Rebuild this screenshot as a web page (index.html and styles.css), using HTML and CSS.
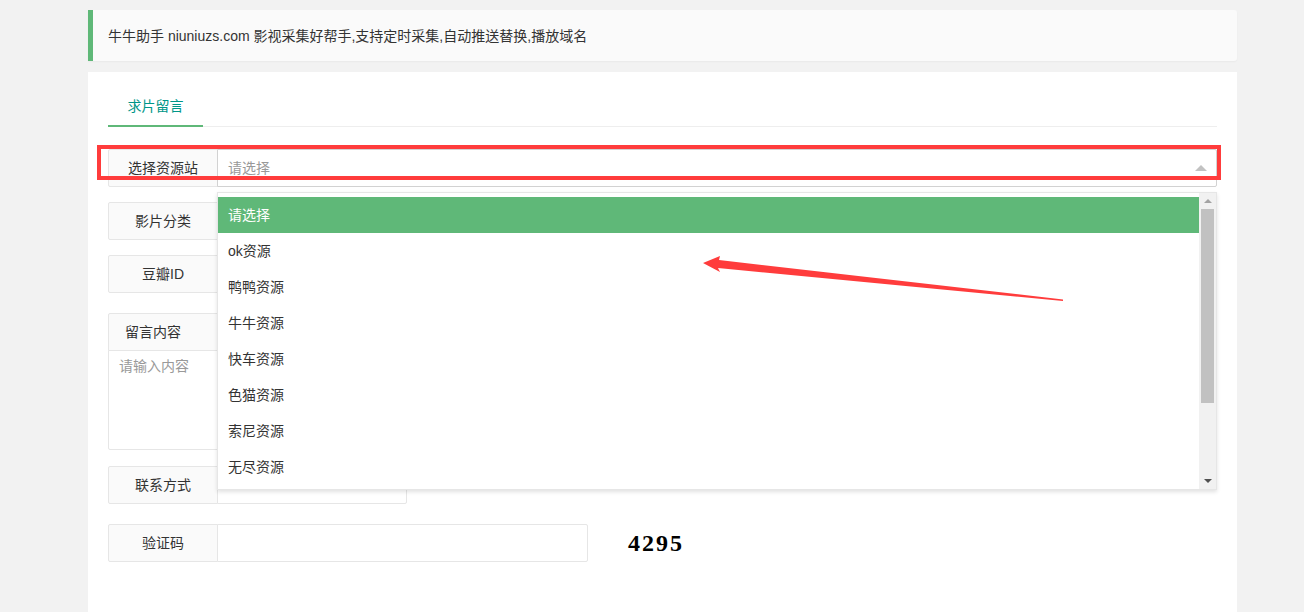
FILE: index.html
```html
<!DOCTYPE html>
<html lang="zh-CN">
<head>
  <meta charset="UTF-8" />
  <title>求片留言</title>
  <link rel="stylesheet" href="styles.css">
</head>
<body>

  <div class="page">
    <blockquote class="quote">牛牛助手 niuniuzs.com 影视采集好帮手,支持定时采集,自动推送替换,播放域名</blockquote>

    <div class="card">
      <ul class="tab-title">
        <li class="tab-this">求片留言</li>
      </ul>

      <form class="form">
        <div class="item">
          <label class="label">选择资源站</label>
          <div class="field">
            <div class="select-box">
              <span class="placeholder">请选择</span>
              <i class="edge"></i>
            </div>
            <div class="dropdown">
              <dl class="options">
                <dd class="option option-this">请选择</dd>
                <dd class="option">ok资源</dd>
                <dd class="option">鸭鸭资源</dd>
                <dd class="option">牛牛资源</dd>
                <dd class="option">快车资源</dd>
                <dd class="option">色猫资源</dd>
                <dd class="option">索尼资源</dd>
                <dd class="option">无尽资源</dd>
              </dl>
              <div class="scrollbar">
                <span class="sb-btn"><i class="sb-up"></i></span>
                <span class="sb-thumb"></span>
                <span class="sb-track"></span>
                <span class="sb-btn"><i class="sb-down"></i></span>
              </div>
            </div>
          </div>
        </div>

        <div class="item">
          <label class="label">影片分类</label>
          <div class="field"><input class="input" type="text"></div>
        </div>

        <div class="item item-wide">
          <label class="label">豆瓣ID</label>
          <div class="field"><input class="input" type="text"></div>
        </div>

        <div class="item-text">
          <label class="label label-block">留言内容</label>
          <textarea class="textarea" placeholder="请输入内容"></textarea>
        </div>

        <div class="item item-wide">
          <label class="label">联系方式</label>
          <div class="field field-short"><input class="input" type="text"></div>
        </div>

        <div class="item">
          <label class="label">验证码</label>
          <div class="field field-mid"><input class="input" type="text"></div>
          <span class="captcha">4295</span>
        </div>
      </form>
    </div>
  </div>

  <svg class="marks" width="1304" height="612" viewBox="0 0 1304 612">
    <rect x="99" y="147" width="1120" height="31" fill="none" stroke="#ff3c3c" stroke-width="4"/>
    <polygon fill="#ff3c3c" points="703,263 720,256 719,260 1063,299.5 1063,301 718,268 720,272"/>
  </svg>

</body>
</html>
```

FILE: styles.css
```css
* {
  margin: 0;
  padding: 0;
  box-sizing: border-box;
}

body {
  font-family: "Liberation Sans", "Noto Sans CJK SC", sans-serif;
  font-size: 14px;
  color: #333;
  background: #f2f2f2;
  overflow: hidden;
  position: relative;
}

.page {
  width: 1149px;
  margin-left: 88px;
  padding-top: 10px;
}

.quote {
  height: 51px;
  line-height: 52px;
  padding: 0 15px;
  border-left: 5px solid #5fb878;
  border-radius: 0 3px 3px 0;
  background: #fafafa;
  box-shadow: 0 1px 2px rgba(0, 0, 0, 0.04);
  margin-bottom: 11px;
}

.card {
  background: #fff;
  height: 560px;
  padding: 14px 20px 0;
}

.tab-title {
  list-style: none;
  display: flex;
  height: 41px;
  border-bottom: 1px solid #eee;
}

.tab-this {
  position: relative;
  width: 95px;
  line-height: 40px;
  text-align: center;
  color: #009688;
}

.tab-this::after {
  content: '';
  position: absolute;
  left: 0;
  right: 0;
  bottom: -1px;
  height: 2px;
  background: #5fb878;
}

.form {
  margin-top: 22px;
}

.item {
  display: flex;
  align-items: center;
  height: 38px;
  margin-bottom: 15px;
}

.item-wide {
  margin-bottom: 20px;
}

.label {
  display: block;
  width: 110px;
  height: 38px;
  line-height: 36px;
  text-align: center;
  border: 1px solid #e6e6e6;
  border-radius: 2px 0 0 2px;
  background: #fafafa;
  color: #333;
}

.field {
  position: relative;
  flex: 1;
  height: 38px;
  margin-left: -1px;
}

.field-short {
  flex: 0 0 190px;
}

.field-mid {
  flex: 0 0 371px;
}

.input {
  display: block;
  width: 100%;
  height: 38px;
  padding: 0 10px;
  border: 1px solid #e6e6e6;
  border-radius: 0 2px 2px 0;
  background: #fff;
  font: inherit;
  outline: none;
}

.select-box {
  position: relative;
  height: 38px;
  line-height: 36px;
  padding: 0 10px;
  border: 1px solid #d2d2d2;
  border-radius: 0 2px 2px 0;
  background: #fff;
}

.placeholder {
  color: #999;
}

.edge {
  position: absolute;
  right: 9px;
  top: 15px;
  width: 0;
  height: 0;
  border-left: 6px solid transparent;
  border-right: 6px solid transparent;
  border-bottom: 6px solid #c2c2c2;
}

.dropdown {
  position: absolute;
  top: 43px;
  left: 0;
  right: 0;
  height: 298px;
  display: flex;
  border: 1px solid #e6e6e6;
  background: #fff;
  box-shadow: 0 2px 4px rgba(0, 0, 0, 0.12);
  z-index: 10;
}

.options {
  flex: 1;
  padding-top: 4px;
  overflow: hidden;
}

.option {
  height: 36px;
  line-height: 36px;
  padding: 0 10px;
  white-space: nowrap;
  color: #333;
}

.option-this {
  background: #5fb878;
  color: #fff;
}

.scrollbar {
  width: 17px;
  display: flex;
  flex-direction: column;
  background: #f1f1f1;
}

.sb-btn {
  height: 16px;
  display: flex;
  align-items: center;
  justify-content: center;
}

.sb-up {
  border-left: 4px solid transparent;
  border-right: 4px solid transparent;
  border-bottom: 4px solid #a3a3a3;
}

.sb-down {
  border-left: 4px solid transparent;
  border-right: 4px solid transparent;
  border-top: 4px solid #505050;
}

.sb-thumb {
  height: 194px;
  margin: 0 2px;
  background: #c1c1c1;
}

.sb-track {
  flex: 1;
}

.item-text {
  margin-bottom: 16px;
}

.label-block {
  width: 100%;
  text-align: left;
  padding-left: 16px;
  border-radius: 2px 2px 0 0;
}

.textarea {
  display: block;
  width: 100%;
  height: 100px;
  margin-top: -1px;
  padding: 4px 10px;
  line-height: 20px;
  border: 1px solid #e6e6e6;
  border-radius: 0 0 2px 2px;
  font: inherit;
  resize: none;
  outline: none;
}

.textarea::placeholder {
  color: #999;
}

.captcha {
  margin-left: 40px;
  font-family: "Liberation Serif", serif;
  font-weight: bold;
  font-size: 24px;
  letter-spacing: 2px;
  color: #000;
}

.marks {
  position: absolute;
  top: 0;
  left: 0;
  pointer-events: none;
  z-index: 20;
}
```
